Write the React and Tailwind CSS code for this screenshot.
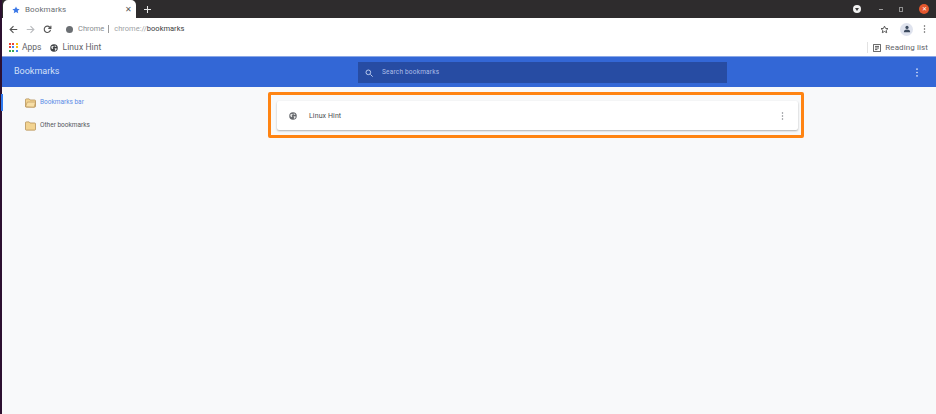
import React from "react";

const font = { fontFamily: "Roboto, 'Liberation Sans', sans-serif" };

function Dots({ className }) {
  return (
    <svg viewBox="0 0 4 12" className={className} fill="currentColor">
      <circle cx="2" cy="1.5" r="1.1" />
      <circle cx="2" cy="6" r="1.1" />
      <circle cx="2" cy="10.5" r="1.1" />
    </svg>
  );
}

function Globe({ className }) {
  return (
    <svg viewBox="0 0 16 16" className={className}>
      <circle cx="8" cy="8" r="7.5" fill="currentColor" />
      <path d="M3 4.5 6.5 3.5 7.5 5.5 5.5 7 6.5 9 5 10.5 2.5 8ZM9.5 2.5 13 4.5 11 6 9 5ZM9 8.5h4l.5 2L11 13.5 9.5 13 10 11Z" fill="#e8e8e8" />
    </svg>
  );
}

function Folder({ open }) {
  return (
    <svg viewBox="0 0 12 10" className="w-[11px] h-[10px]">
      <path d="M.5 1.5a1 1 0 0 1 1-1h3l1 1.2h5a1 1 0 0 1 1 1V8.500a1 1 0 0 1-1 1h-9a1 1 0 0 1-1-1Z" fill="#f3d491" stroke="#b08a4e" strokeWidth=".8" />
      {open && <path d="M.6 9 2.500 4h9L10 9.500Z" fill="#f8dfa6" stroke="#b08a4e" strokeWidth=".6" />}
    </svg>
  );
}

function AppsGrid() {
  const colors = ["#ea4335", "#ea4335", "#fbbc05", "#ea4335", "#4285f4", "#fbbc05", "#34a853", "#34a853", "#4285f4"];
  return (
    <div className="grid grid-cols-3 gap-[1px] w-[9px] h-[9px]">
      {colors.map((c, i) => (
        <span key={i} style={{ background: c }} className="block w-[2px] h-[2px]" />
      ))}
    </div>
  );
}

export default function App() {
  return (
    <div style={font} className="w-[936px] h-[414px] overflow-hidden flex bg-[#f8f9fa]">
      <div className="w-[2px] shrink-0 bg-[#2c1030]" />
      <div className="flex-1 min-w-0 flex flex-col">
        <div className="h-[18px] shrink-0 bg-[#2e2c2d] flex items-end pl-[1px]">
          <div className="w-[133px] h-[18px] bg-white rounded-t-[5px] flex items-center pt-[1px] pl-[9px] pr-[4px]">
            <svg viewBox="0 0 24 24" className="w-[8px] h-[8px]" fill="#3b78e7">
              <path d="M12 1.500l3.200 7.100 7.700.8-5.800 5.100 1.700 7.600L12 18.200l-6.800 3.900 1.700-7.600L1.100 9.400l7.700-.8Z" />
            </svg>
            <span className="ml-[5px] text-[8px] text-[#6a6e73] tracking-[0.1px]">Bookmarks</span>
            <span className="ml-auto text-[8px] leading-none text-[#5a5a5a]">✕</span>
          </div>
          <svg viewBox="0 0 10 10" className="w-[7px] h-[7px] ml-[8px] mb-[5px]" stroke="#e8e8e8" strokeWidth="1.500">
            <path d="M5 0v10M0 5h10" />
          </svg>
          <div className="ml-auto flex items-center h-[18px] pr-[7px]">
            <div className="w-[8px] h-[8px] rounded-full bg-[#f0f0f0] flex items-center justify-center">
              <span className="w-0 h-0 border-x-[2px] border-x-transparent border-t-[3px] border-t-[#3a3a3a]" />
            </div>
            <div className="ml-[18px] w-[4px] h-[1px] bg-[#9f9f9f]" />
            <div className="ml-[16px] w-[4px] h-[5px] border border-[#8f8f8f]" />
            <div className="ml-[16px] w-[10px] h-[10px] rounded-full bg-[#e4572e] flex items-center justify-center text-white text-[6px] leading-none">✕</div>
          </div>
        </div>

        <div className="h-[19px] shrink-0 bg-white flex items-center pt-[3px] text-[#5f6368]">
          <svg viewBox="0 0 12 12" className="w-[9px] h-[9px] ml-[7px]" fill="none" stroke="#555" strokeWidth="1.500">
            <path d="M11 6H2M6 1.500 1.500 6 6 10.500" />
          </svg>
          <svg viewBox="0 0 12 12" className="w-[9px] h-[9px] ml-[8px]" fill="none" stroke="#b9bbbe" strokeWidth="1.500">
            <path d="M1 6h9M6 1.500 10.500 6 6 10.500" />
          </svg>
          <svg viewBox="0 0 12 12" className="w-[9px] h-[9px] ml-[8px]" fill="none" stroke="#555" strokeWidth="1.500">
            <path d="M10 6.500A4.200 4.200 0 1 1 8.800 2.700L10.500 4.500M10.500 1v3.500H7" />
          </svg>
          <div className="ml-[5px] flex-1 h-[16px] rounded-l-full flex items-center pl-[9px] bg-white">
            <span className="w-[7px] h-[7px] rounded-full bg-[#6b6f73]" />
            <span className="ml-[5px] text-[7.500px] font-normal text-[#8a8e92]">Chrome</span>
            <span className="ml-[4px] w-px h-[8px] bg-[#9a9a9a]" />
            <span className="ml-[5px] text-[7.500px] text-[#a0a3a6]">
              chrome://<span className="text-[#3a3c40]">bookmarks</span>
            </span>
          </div>
          <svg viewBox="0 0 24 24" className="w-[9px] h-[9px] mr-[11px]" fill="none" stroke="#4a4a4a" strokeWidth="2.400">
            <path d="M12 3l2.800 6 6.500.7-4.800 4.400 1.300 6.400L12 17.300 6.200 20.500l1.300-6.400L2.700 9.700 9.200 9Z" />
          </svg>
          <div className="w-[13px] h-[13px] rounded-full bg-[#dfe3ee] flex items-center justify-center">
            <svg viewBox="0 0 10 10" className="w-[8px] h-[8px]" fill="#3c4a5e">
              <circle cx="5" cy="3" r="2" />
              <path d="M1 9c0-2.500 2-3.300 4-3.300S9 6.500 9 9Z" />
            </svg>
          </div>
          <Dots className="w-[3px] h-[8px] ml-[10px] mr-[10px] text-[#555]" />
        </div>

        <div className="h-[19px] shrink-0 bg-white flex items-center pt-[2px] text-[8.500px] text-[#5f6368]">
          <div className="ml-[7px]"><AppsGrid /></div>
          <span className="ml-[4px]">Apps</span>
          <Globe className="ml-[9px] w-[8px] h-[8px] text-[#3c3f42]" />
          <span className="ml-[4px] tracking-[0.1px]">Linux Hint</span>
          <span className="ml-auto w-px h-[11px] bg-[#e2e2e2]" />
          <svg viewBox="0 0 10 10" className="ml-[5px] w-[8px] h-[8px]" fill="none" stroke="#555" strokeWidth="1.200">
            <path d="M.5.500h9v9h-9ZM2.500 3h5M2.500 5h5M2.500 7h3" />
          </svg>
          <span className="ml-[4px] mr-[8px] text-[8px] tracking-[0.1px]">Reading list</span>
        </div>

        <div className="h-[31px] shrink-0 bg-[#3367d6] border-t border-[#8aa7e6] flex items-center text-white">
          <span className="ml-[12px] w-[344px] shrink-0 text-[9px] text-[#d5e0f7]">Bookmarks</span>
          <div className="w-[369px] h-[21px] bg-[#274ca3] flex items-center pt-[1px] pl-[7px]">
            <svg viewBox="0 0 12 12" className="w-[8px] h-[8px]" fill="none" stroke="#c3d2f2" strokeWidth="1.400">
              <circle cx="5" cy="5" r="3.500" />
              <path d="M8 8l3.500 3.500" />
            </svg>
            <span className="ml-[9px] text-[6.500px] text-[#aebfe8] tracking-[0.2px]">Search bookmarks</span>
          </div>
          <Dots className="ml-auto mr-[17px] w-[4px] h-[9px] text-[#e3eafa]" />
        </div>

        <div className="flex-1 flex min-h-0">
          <div className="w-[266px] shrink-0 pt-[5px] text-[6.500px]">
            <div className="h-[21px] flex items-center">
              <span className="w-[2px] h-[17px] -ml-[1px] bg-[#2f7bf0]" />
              <span className="ml-[22px]"><Folder open /></span>
              <span className="ml-[4px] text-[#5b8ce6]">Bookmarks bar</span>
            </div>
            <div className="h-[21px] mt-[2px] flex items-center">
              <span className="ml-[23px]"><Folder /></span>
              <span className="ml-[4px] text-[#55585d]">Other bookmarks</span>
            </div>
          </div>
          <div className="w-[536px] h-[46px] mt-[5px] border-[3px] border-[#ff8412] rounded-[2px] pl-[6px] pr-[3px] pt-[6px]">
            <div className="h-[29px] pt-[1px] bg-white shadow-[0_1px_2px_rgba(0,0,0,0.3)] rounded-[2px] flex items-center text-[7px] text-[#4a4d52]">
              <Globe className="ml-[12px] w-[8px] h-[8px] text-[#66696d]" />
              <span className="ml-[12px] tracking-[0.1px]">Linux Hint</span>
              <Dots className="ml-auto mr-[14px] w-[3px] h-[8px] text-[#808387]" />
            </div>
          </div>
        </div>
      </div>
    </div>
  );
}
